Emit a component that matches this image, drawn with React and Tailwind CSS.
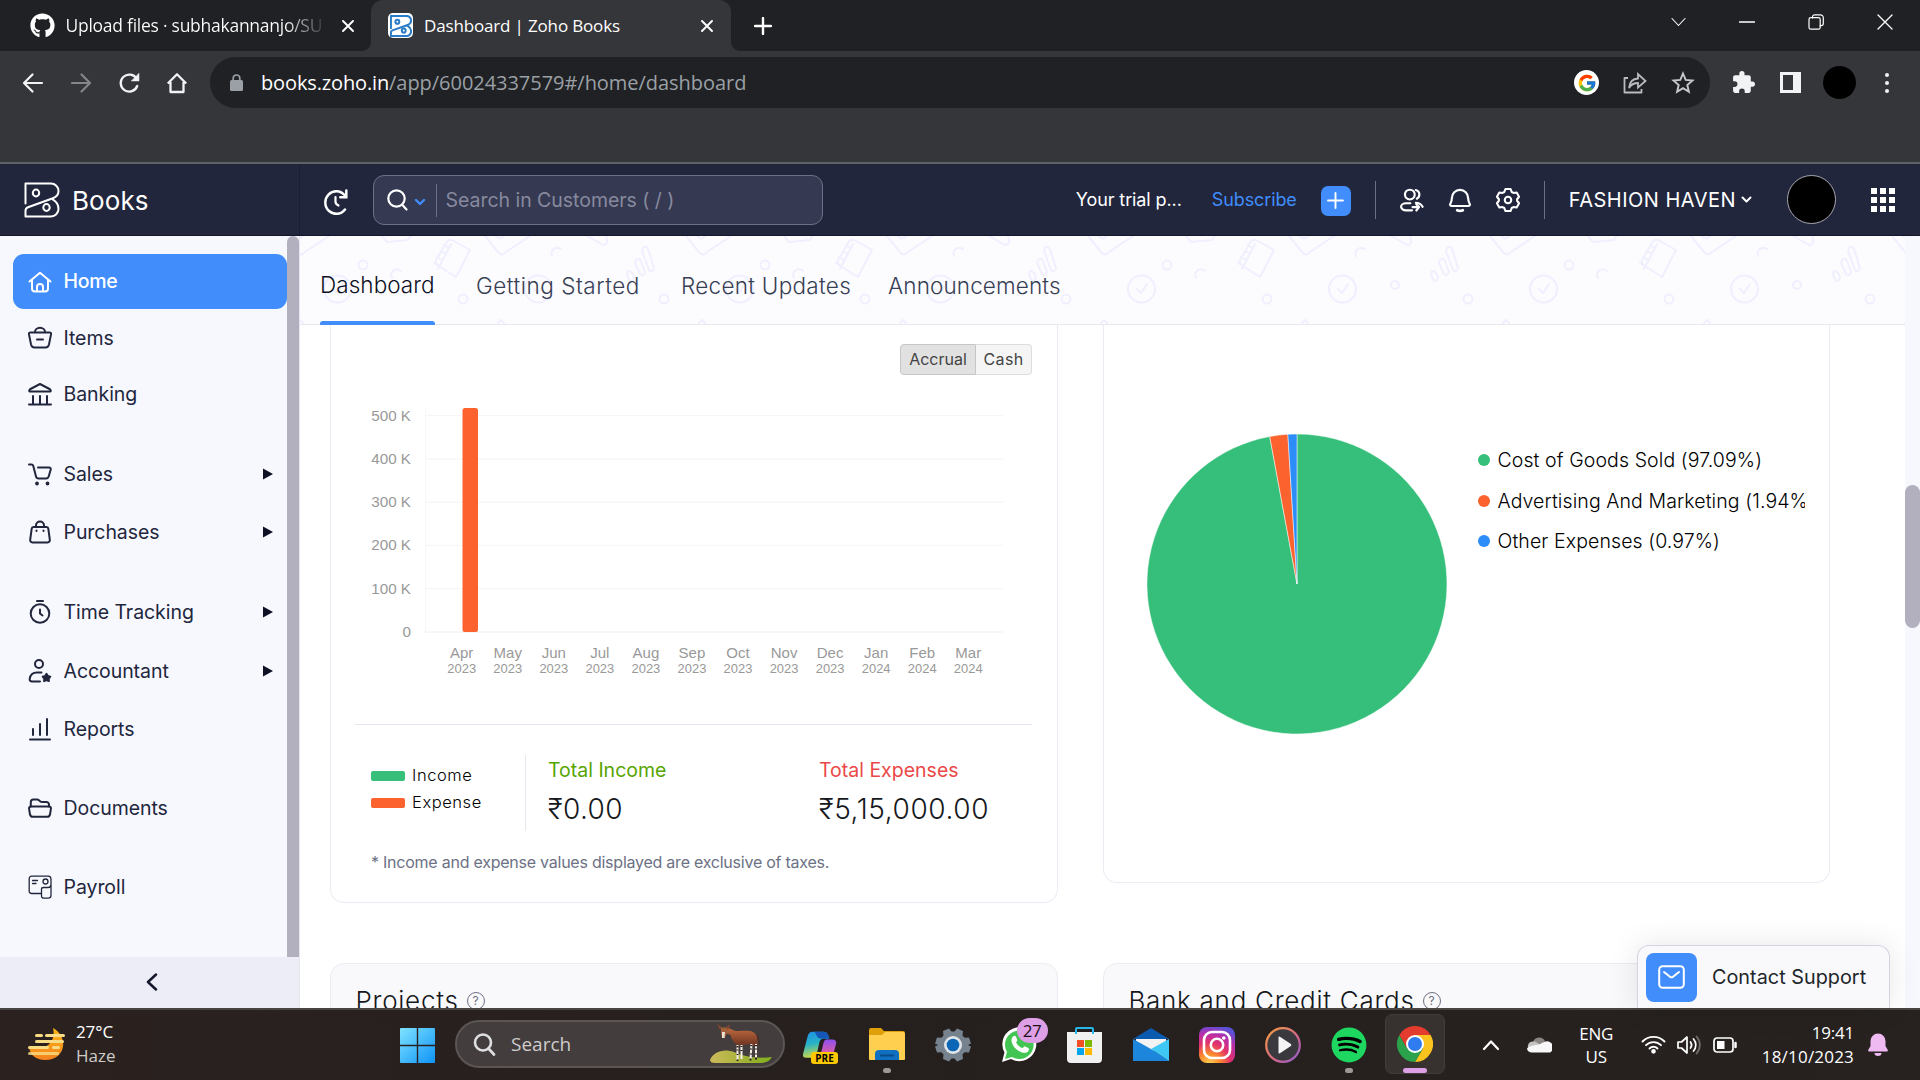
import React from "react";
import { FaGithub, FaSpotify } from "react-icons/fa";
import { FcGoogle } from "react-icons/fc";

/* ---------- shared ---------- */

function Svg({ w = 24, h = w, box = `0 0 ${w} ${h}`, sw = 2, className = "", children }) {
  return (
    <svg width={w} height={h} viewBox={box} fill="none" stroke="currentColor" strokeWidth={sw}
      strokeLinecap="round" strokeLinejoin="round" className={`block shrink-0 ${className}`}>
      {children}
    </svg>
  );
}

const BooksMark = ({ w, h, sw = 2 }) => (
  <Svg w={w} h={h} box="0 0 36 36" sw={sw}>
    <path d="M1.500 21.500V1.500H27a7.500 7.500 0 0 1 7.500 7.500c0 4-2.200 6-5.600 7.300L4 25.200c-1.800.7-2.500 1.800-2.500 3.600v5.700H27a7.500 7.500 0 0 0 7.500-7.500c0-4-2.400-7.600-5.600-9.400" />
    <ellipse cx="12" cy="11" rx="3.200" ry="3.400" />
    <ellipse cx="22.500" cy="25.500" rx="3.200" ry="3.400" />
  </Svg>
);

/* ---------- browser ---------- */

const CloseX = ({ size = 12, sw = 1.9 }) => (
  <Svg w={size} box="0 0 12 12" sw={sw}><path d="M1 1l10 10M11 1L1 11" /></Svg>
);

function TabStrip() {
  return (
    <div className="flex h-[51px] bg-[#202124] text-white">
      <div className="flex w-[371px] items-center pl-[29.500px] pr-[17px]">
        <FaGithub className="size-[25px] shrink-0" />
        <div className="ml-[11px] w-[257.500px] overflow-hidden whitespace-nowrap bg-gradient-to-r from-white from-85% to-[#3a3b3e] bg-clip-text text-[17.500px] tracking-[-0.260px] text-transparent">
          Upload files · subhakannanjo/SU
        </div>
        <div className="ml-[19px]"><CloseX /></div>
      </div>
      <div className="relative flex w-[360px] items-center rounded-t-[12px] bg-[#35363a] pl-[17px]">
        <svg className="absolute -left-[9px] bottom-0" width="9" height="9"><path d="M9 0v9H0A9 9 0 0 0 9 0" fill="#35363a" /></svg>
        <svg className="absolute -right-[9px] bottom-0" width="9" height="9"><path d="M0 0v9h9A9 9 0 0 1 0 0" fill="#35363a" /></svg>
        <div className="flex size-[25px] items-center justify-center rounded-[5px] bg-white text-[#2a7cc7]">
          <BooksMark w={22} h={22} sw={3.300} />
        </div>
        <div className="ml-[11px] w-[277px] text-[17px] tracking-[-0.160px]">Dashboard | Zoho Books</div>
        <CloseX />
      </div>
      <div className="ml-[23px] self-center"><Svg w={18} sw={2.400}><path d="M9 1v16M1 9h16" /></Svg></div>
      <div className="ml-auto mr-[27px] flex items-center gap-[53px] pb-[8px]">
        <Svg w={15} sw={1.100}><path d="M1 4.500l6.500 7 6.500-7" /></Svg>
        <Svg w={16} sw={1.300}><path d="M0.500 8h15" /></Svg>
        <Svg w={16} sw={1.200}><path d="M4.500 4V3a2.200 2.200 0 0 1 2.200-2.200h5.600A3 3 0 0 1 15.300 3.800v5.700a2.200 2.200 0 0 1-2.200 2.200h-.9" /><rect x="1" y="3.600" width="11.200" height="11.600" rx="1.800" /></Svg>
        <Svg w={16} sw={1.300}><path d="M1 1l14 14M15 1L1 15" /></Svg>
      </div>
    </div>
  );
}

function Toolbar() {
  return (
    <div className="h-[113px] border-b-2 border-[#5f6166] bg-[#35363a]">
      <div className="flex items-center pl-[22px] pt-[6px] text-[#f1f3f4]">
        <Svg w={22} sw={2.200}><path d="M20 11H2.500M10.500 2.500L2 11l8.500 8.500" /></Svg>
        <Svg w={22} sw={2.200} className="ml-[26px] text-[#85868a]"><path d="M2 11h17.500M11.500 2.500L20 11l-8.500 8.500" /></Svg>
        <Svg w={22} sw={2.300} className="ml-[26px]"><path d="M19.200 14a8.500 8.500 0 1 1-.5-7" /><path d="M21 1.500v7.500h-7.500z" fill="currentColor" strokeWidth="0.500" /></Svg>
        <Svg w={22} sw={2.300} className="ml-[26px]"><path d="M4.500 10v10h13V10M1.800 11.500L11 2.200l9.200 9.300" strokeLinecap="butt" /></Svg>
        <div className="ml-[22px] flex h-[51px] w-[1500px] items-center rounded-full bg-[#202124] pl-[20px] pr-[15px]">
          <svg width="13" height="17" viewBox="0 0 13 17"><rect y="6" width="13" height="11" rx="1.500" fill="#9aa0a6" /><path d="M3.200 7V4.300a3.300 3.300 0 0 1 6.600 0V7" fill="none" stroke="#9aa0a6" strokeWidth="1.700" /></svg>
          <div className="ml-[18px] text-[20px] text-[#9aa0a6]">
            <span className="tracking-[-0.140px] text-white">books.zoho.in</span>
            <span className="tracking-[-0.040px]">/app/60024337579#/home/dashboard</span>
          </div>
          <div className="ml-auto flex size-[25px] items-center justify-center rounded-full bg-white"><FcGoogle className="size-[20px]" /></div>
          <Svg w={24} sw={1.800} className="ml-[24px] text-[#b8bbbf]"><path d="M5 7H1.500v14.500h17V18" strokeLinecap="butt" /><path d="M6 17c.6-6 4-9.300 9-9.500V3l7.500 7-7.500 6.500V12c-4 0-7 1.500-9 5z" strokeLinejoin="miter" /></Svg>
          <Svg w={24} sw={1.900} className="ml-[24px] text-[#c6c9cc]"><path d="M12 2.500l2.700 6.400 6.800.6-5.200 4.500 1.600 6.800L12 17.200l-5.900 3.600 1.600-6.800-5.200-4.500 6.800-.6z" strokeLinejoin="miter" /></Svg>
        </div>
        <svg className="ml-[21px]" width="25" height="25" viewBox="0 0 24 24" fill="#f1f3f4"><path d="M20.500 11H19V7c0-1.100-.9-2-2-2h-4V3.500a2.500 2.500 0 0 0-5 0V5H4c-1.100 0-2 .9-2 2v3.800h1.500a2.700 2.700 0 0 1 0 5.400H2V20c0 1.100.9 2 2 2h3.800v-1.500a2.700 2.700 0 0 1 5.400 0V22H17c1.100 0 2-.9 2-2v-4h1.500a2.500 2.500 0 0 0 0-5z" /></svg>
        <svg className="ml-[24px]" width="21" height="21"><path fillRule="evenodd" fill="#f1f3f4" d="M0 0h21v21H0zM3 3v15h10V3z" /></svg>
        <div className="ml-[22px] size-[33px] rounded-full bg-black" />
        <div className="ml-[29px] flex flex-col gap-[4px]">
          {[0, 1, 2].map((i) => <i key={i} className="size-[4px] rounded-full bg-[#f1f3f4]" />)}
        </div>
      </div>
    </div>
  );
}

/* ---------- app header ---------- */

function AppHeader() {
  return (
    <header className="flex h-[72px] border-b border-[#17152b] bg-[#21263c] font-[Inter,sans-serif] text-white">
      <div className="flex w-[300px] items-center border-r border-[#1a1e31] pl-[24px]">
        <BooksMark w={36} h={36} />
        <span className="ml-[12px] mt-[2px] text-[26px] tracking-[0.100px]">Books</span>
      </div>
      <Svg w={26} sw={2.500} className="ml-[23px] mt-[25px] self-start"><path d="M22 20.500a11 11.300 0 1 1-.5-14.500" /><path d="M23.300 1.500v6.700h-6" strokeLinejoin="miter" /><path d="M12.500 8v5c0 1.500 1 2.500 3 3.500" strokeWidth="2.200" /></Svg>
      <div className="ml-[24px] mt-[11px] flex h-[50px] w-[450px] items-center rounded-[11px] border border-[#6d7084] bg-[#353952]">
        <Svg w={22} sw={2.200} className="ml-[13px]"><circle cx="9.500" cy="9.500" r="8.200" /><path d="M15.500 16L19.500 20.500" /></Svg>
        <Svg w={12} h={12} sw={2.400} className="ml-[5px] mt-[4px] text-[#408dfb]"><path d="M2 4l4 4 4-4" /></Svg>
        <div className="ml-[10px] h-[33px] w-px bg-[#6d7084]" />
        <span className="ml-[8.500px] mt-px text-[19.500px] tracking-[-0.030px] text-[#878a9e]">Search in Customers ( / )</span>
      </div>
      <div className="ml-auto flex items-center whitespace-nowrap pr-[25px]">
        <span className="w-[136px] text-[18px] tracking-[-0.100px]">Your trial p...</span>
        <span className="w-[109px] text-[18px] tracking-[-0.100px] text-[#408dfb]">Subscribe</span>
        <span className="mt-[2px] flex size-[30px] items-center justify-center rounded-[7px] bg-[#408dfb]"><Svg w={17} sw={1.900}><path d="M8.500 1v15M1 8.500h15" /></Svg></span>
        <div className="ml-[24px] h-[38px] w-px bg-[#6d7084]" />
        <Svg w={26} box="0 0 24 24" sw={2} className="ml-[23px]">
          <circle cx="10" cy="7" r="4.500" /><path d="M15.500 2.800a4.300 4.300 0 0 1 1 8" /><path d="M10.500 15H6.500a4.500 3.200 0 0 0 0 6.500h5.500M12.500 18.500H18.500M16 16l2.500 2.500-2.500 3.200M15.500 14.500c2.500 0 5 1.200 6.300 3.800" />
        </Svg>
        <Svg w={26} box="0 0 24 24" sw={2} className="ml-[22px]"><path d="M4.500 17.500c-1.500 0-2-.8-1.500-1.800 1-1.700 1.500-3 1.500-5.500a7.500 7.500 0 0 1 15 0c0 2.500.5 3.800 1.500 5.500.5 1 0 1.800-1.500 1.800z" /><path d="M9.500 21.500q2.500 1.200 5 0" strokeWidth="2.600" /></Svg>
        <Svg w={26} box="0 0 24 24" sw={1.900} className="ml-[22px]"><circle cx="12" cy="12" r="3" /><path d="M9.700 1.800h4.600l1.100 2.800 1.600.9 3-.5 2.200 4-1.800 2.300v1.400l1.800 2.300-2.200 4-3-.5-1.600.9-1.100 2.800H9.700l-1.100-2.800-1.600-.9-3 .5-2.200-4 1.800-2.300v-1.400L1.800 9 4 5l3 .5 1.600-.9z" /></Svg>
        <div className="ml-[23px] h-[38px] w-px bg-[#6d7084]" />
        <span className="ml-[24px] text-[20px] tracking-[0.480px]">FASHION HAVEN</span>
        <Svg w={11} sw={2} className="ml-[5px]"><path d="M1.500 3.500l4 4 4-4" /></Svg>
        <div className="ml-[35px] size-[49px] rounded-full border border-[#a7a8b3] bg-black" />
        <div className="ml-[35px] grid grid-cols-3 gap-[3px]">
          {Array.from({ length: 9 }, (_, i) => <i key={i} className="size-[6px] bg-white" />)}
        </div>
      </div>
    </header>
  );
}

/* ---------- sidebar ---------- */

const ICONS = {
  Home: <><path d="M1.500 11.500L12 2.800l10.500 8.700" /><path d="M4 10v8.500a3 3 0 0 0 3 3h10a3 3 0 0 0 3-3V10" /><path d="M9 21v-4a3 3 0 0 1 6 0v4" /></>,
  Items: <><path d="M2.500 6.500h19q1.800 0 1.500 1.900l-2 10q-.7 3.100-3.500 3.100h-11q-2.800 0-3.500-3.100L1 8.400Q.7 6.500 2.500 6.500zM7 6a5 4.300 0 0 1 10 0M9 13.500h6" /></>,
  Banking: <><path d="M1.500 9.500c-.6-1 0-2 1-2.500L12 2l9.500 5c1 .5 1.600 1.500 1 2.500z" /><path d="M1 22.500h22M5 14v8M12 14v8M19 14v8" /></>,
  Sales: <><path d="M1 2.500h2.500c1 0 1.500.5 1.800 1.500L8 14.500c.4 1.500 1.200 2 2.500 2h7.500c1.500 0 2.300-.7 2.700-2l2-7c.3-1.200-.4-2-1.700-2H10" /><circle cx="9" cy="21.500" r="0.900" fill="currentColor" /><circle cx="19.500" cy="21.500" r="0.900" fill="currentColor" /></>,
  Purchases: <><path d="M5.500 7h13c1 0 1.700.6 1.800 1.600l1.500 11c.2 1.800-.6 2.900-2.300 2.900h-15c-1.700 0-2.500-1.100-2.300-2.900l1.500-11C3.800 7.600 4.500 7 5.500 7zM8 7V5.500a4 4 0 0 1 8 0V7" /><path d="M8.500 10.500v.5M15.500 10.500v.5" /></>,
  "Time Tracking": <><circle cx="12" cy="13.500" r="9.300" /><path d="M9 1h6M12 9.500v4l2.500 2" /></>,
  Accountant: <><circle cx="11" cy="5" r="4" /><path d="M12 22.500H4c-2 0-2.500-1.300-2.300-2.700.7-4 3.300-6.300 7.300-6.300h4.500" /><path d="M18.500 14.800l1.300 2.200 2.500.6-1.600 2 .2 2.500-2.400-1-2.400 1 .2-2.500-1.600-2 2.500-.6z" fill="currentColor" /></>,
  Reports: <path d="M2 22.500h20M5 12v6M12 7v11M19 2v16" />,
  Documents: <><path d="M2.800 10.500V6a2.500 2.500 0 0 1 2.500-2.500h3.700c1 0 1.500.3 2.200.9l1.200 1c.6.5 1 .6 1.800.6h4.300A2.500 2.500 0 0 1 21 8.500v2" /><path d="M3 10.500h18c1.500 0 2.100 1 1.900 2.300l-.8 5.200c-.3 1.700-1.200 2.800-2.800 2.800H4.700c-1.600 0-2.500-1.100-2.800-2.800l-.8-5.200c-.2-1.300.4-2.300 1.900-2.300z" /></>,
  Payroll: <g strokeWidth="1.300"><path d="M13 18.500H3.500a2.300 2.300 0 0 1-2.300-2.300V3.500a2.300 2.300 0 0 1 2.300-2.300H20A3 3 0 0 1 23 4v16.500a2.800 2.800 0 0 1-2.800 2.700h-4.400a2.300 2.300 0 0 1-2.300-2.300v-6.700c0-1.500 1-1.700 2-1.700H20c1.500 0 3-1 3-3" /><circle cx="17.500" cy="6.500" r="2.500" /><path d="M4.500 5.500h5M4.500 8.500h3.500" /></g>,
};

const NAV = [
  { label: "Home", row: "mt-[18px] h-[55px] rounded-[11px] bg-[#408dfb] text-white" },
  { label: "Items", row: "mt-px h-[56px]" },
  { label: "Banking", row: "h-[56px]" },
  { label: "Sales", row: "mt-[24px] h-[56px]", more: true },
  { label: "Purchases", row: "mt-[2px] h-[56px]", more: true },
  { label: "Time Tracking", row: "mt-[24px] h-[56px]", more: true },
  { label: "Accountant", row: "mt-[3px] h-[56px]", more: true },
  { label: "Reports", row: "mt-[2px] h-[56px]" },
  { label: "Documents", row: "mt-[23px] h-[56px]" },
  { label: "Payroll", row: "mt-[23px] h-[56px]" },
];

function Sidebar() {
  return (
    <aside className="flex w-[300px] shrink-0 flex-col border-r border-[#e6e6ef] bg-[#f7f8fe]">
      <div className="flex h-[721px]">
        <nav className="w-[287px] pl-[13px] text-[#21263c]">
          {NAV.map(({ label, row, more }) => (
            <div key={label} className={`flex items-center pl-[15px] ${row}`}>
              <Svg w={24}>{ICONS[label]}</Svg>
              <span className={`ml-[11.500px] mt-px text-[19.500px] ${label === "Home" ? "font-medium tracking-[-0.300px]" : "tracking-[-0.060px]"}`}>{label}</span>
              {more && <svg className="ml-auto mr-[14px]" width="10" height="12"><path d="M0 0.500l10 5.500L0 11.500z" fill="#0f1225" /></svg>}
            </div>
          ))}
        </nav>
        <div className="w-[12px] rounded-t-full bg-[#b2afbe]" />
      </div>
      <div className="flex flex-1 items-center justify-center bg-[#ecedf7] pb-px pl-[4px] text-[#15182b]">
        <Svg w={12} h={18} sw={2.500}><path d="M10 1.500L2 9l8 7.500" /></Svg>
      </div>
    </aside>
  );
}

/* ---------- dashboard ---------- */

function Doodles() {
  return (
    <svg className="absolute inset-0" width="1605" height="88">
      <defs>
        <pattern id="doodles" x="386" y="0" width="402" height="88" patternUnits="userSpaceOnUse">
          <g fill="none" stroke="#f0effe" strokeWidth="2" strokeLinejoin="round" strokeLinecap="round">
            {[0, 201].map((x) => (
              <g key={x} transform={`translate(${x} 0)`}>
                <path d="M0 0l13 16q4 5 8 0L45 0M11 0q4 5 8 0M13 87l3-3 3 3" />
                <circle cx="53.500" cy="53" r="13.500" />
                <path d="M49 53l4 4 6-9" />
                <circle cx="179" cy="63" r="4.500" />
              </g>
            ))}
            <path d="M98 0l5 6 21-2 3-5" />
            <path d="M168 4l18 10-14 27-19-12q-2-2-1-5l10-17q2-4 6-3M167 8l-13 25M160 9l5 3M157 15l5 3M153 21l5 3M150 27l5 3" />
            <path d="M268 20c-2-6 3-10 9-7M108 42c-3-7 4-11 9-7M303 0l16 9q6 0 3-9" />
            <circle cx="79" cy="29" r="4.500" /><circle cx="307" cy="49" r="4" />
            <path d="M359 12q3-3 5 1l6 19q-2 5-5 2l-7-19zM352 24q3-3 5 1l4 11q-2 5-5 2l-5-11zM344 35q5 0 6 7-2 5-5 1-3-5-1-8z" />
          </g>
        </pattern>
      </defs>
      <rect width="1605" height="88" fill="url(#doodles)" />
    </svg>
  );
}

function Tabs() {
  return (
    <div className="relative h-[89px] border-b border-[#e8e8f1] bg-[#fcfcff]">
      <Doodles />
      <div className="relative flex h-[89px] whitespace-nowrap pl-[20px] text-[22.500px] font-[360] leading-[28px] text-[#383e54]">
        <div className="w-[115px] pt-[35px] tracking-[0.060px] text-[#0d1022]">
          Dashboard
          <div className="mt-[22px] h-[4px] rounded-t-[3px] bg-[#408dfb]" />
        </div>
        <div className="ml-[41px] w-[205px] pt-[36px] tracking-[0.520px]">Getting Started</div>
        <div className="w-[207px] pt-[36px] tracking-[0.280px]">Recent Updates</div>
        <div className="pt-[36px] tracking-[0.120px]">Announcements</div>
      </div>
    </div>
  );
}

const MONTHS = ["Apr", "May", "Jun", "Jul", "Aug", "Sep", "Oct", "Nov", "Dec", "Jan", "Feb", "Mar"];
const TICKS = ["500 K", "400 K", "300 K", "200 K", "100 K", "0"];

function BarChart() {
  return (
    <svg className="mt-[20px] block" width="673" height="300" viewBox="355 395 673 300" fontFamily="'Liberation Sans', Arial, sans-serif" fill="#999">
      <path d="M425.500 408V632" stroke="#f7f7f7" />
      {TICKS.map((t, i) => (
        <g key={t}>
          <path d={`M425 ${415.500 + i * 43.300}H1003`} stroke={i === 5 ? "#efeff1" : "#f6f6f7"} strokeWidth="1.200" />
          <text x="411" y={420.500 + i * 43.250} textAnchor="end" fontSize="15.200">{t}</text>
        </g>
      ))}
      <rect x="462.500" y="408" width="15.500" height="224" rx="2.500" fill="#fb622e" />
      {MONTHS.map((m, i) => (
        <g key={m} textAnchor="middle">
          <text x={461.700 + i * 46.050} y="657.800" fontSize="15">{m}</text>
          <text x={461.700 + i * 46.050} y="672.700" fontSize="13.700" textLength="28.800" lengthAdjust="spacingAndGlyphs">{i < 9 ? "2023" : "2024"}</text>
        </g>
      ))}
    </svg>
  );
}

function IncomeCard() {
  return (
    <section className="flex h-[578px] w-[728px] flex-col rounded-b-[14px] border border-t-0 border-[#ebebf3] bg-white pl-[24px] pr-[25px]">
      <div className="mt-[19px] flex h-[31px] self-end text-[16px] leading-[29px] text-[#444]">
        <span className="w-[76px] rounded-l-[4px] border border-[#c6c6c6] bg-[#e1e1e1] text-center">Accrual</span>
        <span className="w-[56px] rounded-r-[4px] border border-l-0 border-[#ddd] bg-[#f5f5f5] text-center tracking-[0.300px]">Cash</span>
      </div>
      <BarChart />
      <div className="mt-[29px] h-px shrink-0 bg-[#e6e6f0]" />
      <div className="mt-[30px] flex h-[76px] whitespace-nowrap pl-[16px]">
        <div className="w-[155px] border-r border-[#e6e6ee] pt-[7px] text-[16.500px] font-[360] leading-[27px] tracking-[0.560px] text-black">
          <div className="flex items-center"><i className="mr-[7px] h-[10px] w-[34px] rounded-[2px] bg-[#36bf7a]" />Income</div>
          <div className="flex items-center"><i className="mr-[7px] h-[10px] w-[34px] rounded-[2px] bg-[#fb622e]" />Expense</div>
        </div>
        <div className="w-[293px] pl-[22px] pt-[2px]">
          <div className="text-[19.500px] leading-[26px] text-[#57a500]">Total Income</div>
          <div className="mt-[8px] text-[28px] font-[360] leading-[36px] tracking-[0.400px] text-[#15181c]">₹0.00</div>
        </div>
        <div className="pt-[2px]">
          <div className="text-[19.500px] leading-[26px] text-[#ea4848]">Total Expenses</div>
          <div className="mt-[8px] text-[28px] font-[360] leading-[36px] tracking-[0.600px] text-[#15181c]">₹5,15,000.00</div>
        </div>
      </div>
      <p className="mt-[18px] whitespace-nowrap pl-[16px] text-[16px] leading-[26px] tracking-[-0.240px] text-[#6c7184]">* Income and expense values displayed are exclusive of taxes.</p>
    </section>
  );
}

const SLICES = [
  { d: "M150 150L150 0A150 150 0 1 1 122.700 2.500Z", fill: "#36bf7a" },
  { d: "M150 150L122.700 2.500A150 150 0 0 1 140.860 0.300Z", fill: "#fb622e" },
  { d: "M150 150L140.860 0.300A150 150 0 0 1 150 0Z", fill: "#2c8df8" },
];

function ExpensesCard() {
  return (
    <section className="ml-[45px] flex h-[558px] w-[727px] rounded-b-[14px] border border-t-0 border-[#ebebf3] bg-white pl-[43px]">
      <svg className="mt-[109px]" width="300" height="300">
        {SLICES.map((s) => <path key={s.fill} d={s.d} fill={s.fill} stroke="#fff" strokeOpacity="0.700" strokeWidth="0.700" />)}
      </svg>
      <ul className="ml-[30.500px] mt-[115px] w-[327px] overflow-hidden whitespace-nowrap text-[19.500px] font-[340] leading-[40.500px] tracking-[0.100px] text-black">
        <li className="flex items-center"><i className="mr-[8px] size-[12px] shrink-0 rounded-full bg-[#36bf7a]" />Cost of Goods Sold (97.09%)</li>
        <li className="flex items-center"><i className="mr-[8px] size-[12px] shrink-0 rounded-full bg-[#fb622e]" />Advertising And Marketing (1.94%)</li>
        <li className="flex items-center"><i className="mr-[8px] size-[12px] shrink-0 rounded-full bg-[#2c8df8]" />Other Expenses (0.97%)</li>
      </ul>
    </section>
  );
}

function StubCard({ title, className }) {
  return (
    <section className={`flex h-[90px] items-start rounded-t-[14px] border border-[#ebebf3] bg-[#f9f9fb] pl-[24.500px] pt-[20px] text-[26px] font-[360] leading-[34px] tracking-[0.720px] text-[#15181c] ${className}`}>
      {title}
      <span className="ml-[8px] mt-[8px] flex size-[18px] items-center justify-center rounded-full border-[1.500px] border-[#6c7184] text-[12px] font-normal tracking-normal text-[#6c7184]">?</span>
    </section>
  );
}

function Main() {
  return (
    <main className="relative flex min-w-0 flex-1">
      <div className="w-[1605px] overflow-hidden bg-white">
        <Tabs />
        <div className="flex items-start pl-[30px]"><IncomeCard /><ExpensesCard /></div>
        <div className="mt-[60px] flex pl-[30px]">
          <StubCard title="Projects" className="w-[728px]" />
          <StubCard title="Bank and Credit Cards" className="ml-[45px] w-[727px]" />
        </div>
      </div>
      <div className="w-[15px] bg-[#f7f7fe] pt-[249px]"><div className="h-[143px] rounded-full bg-[#b2afbe]" /></div>
      <div className="absolute bottom-0 right-[30px] flex h-[63px] w-[253px] items-center rounded-t-[12px] border border-b-0 border-[#d3d3e3] bg-[#f9f9fc] pl-[8px] text-[19.800px] text-[#212529] shadow-[0_0_30px_rgba(0,0,20,0.100)]">
        <span className="mr-[15px] mt-px flex h-[49px] w-[51px] items-center justify-center rounded-[8px] bg-[#408dfb] text-white">
          <Svg w={27} h={24} sw={2} className="mb-[2px]"><rect x="1.200" y="1.200" width="24.600" height="21.600" rx="3.500" /><path d="M6 7l6 4.800q1.500 1 3 0L21 7" /></Svg>
        </span>
        <span className="mt-[2px] tracking-[0.030px]">Contact Support</span>
      </div>
    </main>
  );
}

/* ---------- taskbar ---------- */

const Slot = ({ children, dot }) => (
  <div className="relative flex h-[70px] w-[66px] items-center justify-center pb-px">
    {children}
    {dot && <i className="absolute bottom-[7px] left-[29px] h-[5px] w-[8px] rounded-full bg-[#9b9896]" />}
  </div>
);

function Haze() {
  return (
    <svg width="38" height="36" viewBox="0 0 38 36" className="mb-px">
      <defs><linearGradient id="moon" x1="0" y1="0" x2="0" y2="1"><stop offset="0" stopColor="#fdb913" /><stop offset="1" stopColor="#f4821f" /></linearGradient></defs>
      <path d="M25 1c16 9 13 32-8 32C8 33 2 28 1 20c13 6 28-3 24-19z" fill="url(#moon)" />
      <g fill="#f9dd86"><rect x="7" y="7" width="8" height="3" rx="1.500" /><rect x="17" y="7" width="20" height="3" rx="1.500" /><rect x="7" y="13" width="29" height="3" rx="1.500" /><rect x="0" y="19" width="21" height="3" rx="1.500" /><rect x="24" y="19" width="8" height="3" rx="1.500" /><rect x="0" y="25" width="31" height="3" rx="1.500" opacity=".8" /></g>
    </svg>
  );
}

function Okapi() {
  return (
    <svg width="64" height="40" viewBox="0 0 64 40">
      <defs>
        <linearGradient id="hill" x1="0" y1="0" x2="1" y2="0"><stop offset="0" stopColor="#cdb95a" /><stop offset="1" stopColor="#7fae1b" /></linearGradient>
        <linearGradient id="hide" x1="0" y1="0" x2="0" y2="1"><stop offset="0" stopColor="#c0693f" /><stop offset="1" stopColor="#6b3220" /></linearGradient>
      </defs>
      <path d="M0 36c3-8 14-12 24-8 10 4 20 7 38 5-2 4-6 6-12 6H5c-3 0-5-1-5-3z" fill="url(#hill)" />
      <path d="M16 4c3 0 5 1 8 2.500 5 1.500 13-1 19 1.500 4 2 5 7 4.500 13l-3 1c-2-1-3-2-5-2-4 1-7 1.500-12 1-4-2-6-6-7-10l-5-2z" fill="url(#hide)" />
      <path d="M11 3.500h6l2 4-3 3-1 3.500h-3L11 9z" fill="#a2613b" />
      <path d="M12 8h3l-.5 6h-2.500z" fill="#ece0d3" />
      <path d="M7 0l4.500 3-1.500 2.500zM20 0l-4 3.500 2 2.500z" fill="#8a4a2c" />
      <g strokeWidth="2">
        <path d="M27.500 21v15.500M31.500 21v14M41.500 20l-1 15.500M46 20v15" stroke="#f4eee8" />
        <path d="M27.500 22v1.500M31.500 22v1M41.500 21l-.1 1.200M46 21v1.200M27.500 25.500v1M31.500 26v1M41 24.500v1M46 24.500v1M27.500 30v1M41 29.500v1M46 29.500v1M27.500 35.500v1.500M40.500 34.500v2M46 33.500v2" stroke="#2b1710" />
      </g>
      <path d="M47.500 11l2 10" stroke="#4a261a" />
    </svg>
  );
}

function Copilot() {
  return (
    <div className="relative mr-px mt-[5px]">
      <svg width="35" height="33" viewBox="0 0 36 43" preserveAspectRatio="none">
        <defs>
          <linearGradient id="cpA" x1="0" y1="0" x2="0.200" y2="1"><stop offset="0" stopColor="#1d8fe8" /><stop offset=".5" stopColor="#27b3c6" /><stop offset="1" stopColor="#c6d84b" /></linearGradient>
          <linearGradient id="cpB" x1="0" y1="0" x2="0" y2="1"><stop offset="0" stopColor="#8f4ff0" /><stop offset="1" stopColor="#f8648c" /></linearGradient>
        </defs>
        <path d="M10 1h11q4 0 5 5l1 4h-6q-3 0-4 4l-3 17q-1 4-4 4H4q-5 0-4-5L5 6q1-5 5-5z" fill="url(#cpA)" />
        <path d="M12 1h9q4 0 5 5l1 4h-8q-4 0-5-4z" fill="#1557b8" />
        <path d="M24 11h6q5 0 4 6l-3 14q-1 5-5 5H13q4 0 5-4l3-16q1-5 3-5z" fill="url(#cpB)" />
      </svg>
      <span className="absolute bottom-0 left-[8px] h-[12px] w-[27px] rounded-[3px] bg-[#fdc800] text-center text-[10px] font-bold leading-[12px] text-black">PRE</span>
    </div>
  );
}

const Explorer = () => (
  <svg width="36" height="33" viewBox="0 0 36 33">
    <path d="M0 2q0-2 2-2h10l3 3h19q2 0 2 2v6H0z" fill="#dfa00c" />
    <path d="M0 7h13l3-3h18q2 0 2 2v25q0 1-1 1H1q-1 0-1-1z" fill="#ffd04f" />
    <path d="M6 32v-6q0-4 4-4h16q4 0 4 4v6z" fill="#0f6fc0" /><path d="M12 27.500h12" stroke="#0a4a86" strokeWidth="2" strokeLinecap="round" />
  </svg>
);

const Settings = () => (
  <svg width="36" height="36" viewBox="0 0 36 36">
    <path d="M14 1.500l2.500 3h3L22 1.500l6 2.500-.5 4.500 2 2.200 4.500-.2 2 6-3 1.500 3 1.500-2 6-4.500-.2-2 2.200.5 4.500-6 2.500-2.500-3h-3l-2.500 3-6-2.500.5-4.500-2-2.200-4.500.2-2-6L3 18l-3-1.500 2-6 4.500.2 2-2.200L8 4z" fill="#76828e" />
    <circle cx="18" cy="18" r="9" fill="#dfe4e9" /><circle cx="18" cy="18" r="6.300" fill="#0b67b5" />
  </svg>
);

const WhatsApp = () => (
  <div className="relative">
    <svg width="37" height="37" viewBox="0 0 37 37">
      <path d="M1 36l2.500-9.500A17 17 0 1 1 10 33z" fill="#fff" /><path d="M4 33l2-7A14.300 14.300 0 1 1 11 31z" fill="#43c553" />
      <path d="M12 10.500c1-1 2.500-1 3 .2l1.200 3c.3.800-.1 1.400-1.200 2.600 1.600 3 3.600 4.700 6.600 6 1.100-1.500 1.700-2.200 2.500-1.900l3.200 1.500c1 .5.700 2.200 0 3.300-1.500 1.800-4.200 2.100-7 1-5-2-8.500-5.700-9.700-10.500-.3-2 .2-4 1.400-5.200z" fill="#fff" />
    </svg>
    <span className="absolute -top-[8px] left-[16px] flex h-[25px] w-[31px] items-center justify-center rounded-full bg-[#dd9fe6] text-[17px] tracking-[-0.500px] text-[#1b1017]">27</span>
  </div>
);

const Store = () => (
  <svg width="35" height="36" viewBox="0 0 35 36" className="mr-px">
    <path d="M9 7V2q0-1 1-1h15q1 0 1 1v5" fill="none" stroke="#27b6ea" strokeWidth="2" />
    <path d="M0 5h35v27q0 4-4 4H4q-4 0-4-4z" fill="#f1f1f1" /><path d="M9 5v2M26 5v2" stroke="#27b6ea" strokeWidth="2" />
    <path d="M10 13h7v7h-7z" fill="#f25022" /><path d="M18 13h7v7h-7z" fill="#7fba00" /><path d="M10 21h7v7h-7z" fill="#00a4ef" /><path d="M18 21h7v7h-7z" fill="#ffb900" />
  </svg>
);

const Mail = () => (
  <svg width="36" height="34" viewBox="0 0 36 34">
    <path d="M0 11L18 0l18 11z" fill="#0a5ab0" /><path d="M3 11h30v5L18 24 3 16z" fill="#f3f3f3" />
    <path d="M0 11v22h36L18 21z" fill="#1c86dd" /><path d="M36 11v22L18 21z" fill="#3fc8f4" />
  </svg>
);

const Instagram = () => (
  <svg width="36" height="36" viewBox="0 0 36 36">
    <defs><radialGradient id="ig" cx=".28" cy="1.050" r="1.100"><stop offset="0" stopColor="#fed85a" /><stop offset=".28" stopColor="#fb8a2e" /><stop offset=".55" stopColor="#e3316b" /><stop offset=".8" stopColor="#b52fae" /><stop offset="1" stopColor="#5b50d6" /></radialGradient></defs>
    <rect width="36" height="36" rx="8" fill="url(#ig)" /><rect x="5" y="5" width="26" height="26" rx="8" fill="none" stroke="#fff" strokeWidth="2.600" /><circle cx="18" cy="18" r="6.200" fill="none" stroke="#fff" strokeWidth="2.600" /><circle cx="24.800" cy="11" r="1.800" fill="#fff" />
  </svg>
);

const MediaPlayer = () => (
  <svg width="36" height="36" viewBox="0 0 36 36">
    <defs><linearGradient id="mp" x1="0" y1="0" x2="1" y2="1"><stop offset="0" stopColor="#f9a03c" /><stop offset=".6" stopColor="#d0648a" /><stop offset="1" stopColor="#8a5fd6" /></linearGradient></defs>
    <circle cx="18" cy="18" r="16.800" fill="#3a3a3e" stroke="url(#mp)" strokeWidth="2.200" /><path d="M13.500 10.500q0-1.500 1.400-.7l11 7.300q1 .9 0 1.800l-11 7.300q-1.400.8-1.400-.7z" fill="#f4f4f4" />
  </svg>
);

const Chrome = () => (
  <svg width="36" height="36" viewBox="0 0 36 36">
    <path d="M18 9h15.600A18 18 0 0 1 18 36l7.800-13.500z" fill="#fcc31e" />
    <path d="M2.400 9A18 18 0 0 0 18 36l7.800-13.500-15.600 0z" fill="#2ba24c" />
    <path d="M2.400 9l7.800 13.500L18 9H33.600A18 18 0 0 0 2.400 9z" fill="#e33b2e" />
    <circle cx="18" cy="18" r="9" fill="#fff" /><circle cx="18" cy="18" r="7" fill="#2f7bf0" />
  </svg>
);

function Taskbar() {
  return (
    <footer className="flex h-[72px] items-start border-t-2 border-[#474443] bg-[#272120] bg-gradient-to-r from-[#2b2220] via-[#251f1d] to-[#272220] text-[17px] text-white">
      <div className="flex h-[70px] w-[372px] items-center pl-[28px]">
        <Haze />
        <div className="mb-[2px] ml-[10px] leading-[24px]"><div className="tracking-[-0.100px]">27°C</div><div className="text-[#cfcbc9]">Haze</div></div>
      </div>
      <div className="flex h-[70px] w-[416px] items-center pl-[28px]">
        <svg width="35" height="35" viewBox="0 0 35 35">
          <defs><linearGradient id="win" x1="0" y1="0" x2="1" y2="1"><stop offset="0" stopColor="#7fe3fe" /><stop offset="1" stopColor="#0f93f8" /></linearGradient></defs>
          <path d="M1 0h15.800v16.800H0V1q0-1 1-1zM18.200 0H34q1 0 1 1v15.800H18.200zM0 18.200h16.800V35H1q-1 0-1-1zM18.200 18.200H35V34q0 1-1 1H18.200z" fill="url(#win)" />
        </svg>
        <div className="mb-[2px] ml-[20px] flex h-[48px] w-[330px] items-center rounded-full border-2 border-[#5b5654] bg-[#433e3d] pl-[16px] pr-[9px] text-[19px] text-[#cfcccb]">
          <Svg w={23} sw={2.600} className="text-[#dfdfe2]"><circle cx="10" cy="9.500" r="8" /><path d="M15.500 15.500l5.500 6" /></Svg>
          <span className="ml-[15px] mr-auto">Search</span>
          <Okapi />
        </div>
      </div>
      <Slot><Copilot /></Slot>
      <Slot dot><Explorer /></Slot>
      <Slot><Settings /></Slot>
      <Slot><WhatsApp /></Slot>
      <Slot><Store /></Slot>
      <Slot><Mail /></Slot>
      <Slot><Instagram /></Slot>
      <Slot><MediaPlayer /></Slot>
      <Slot dot><div className="flex size-[34px] items-center justify-center rounded-full bg-black"><FaSpotify className="size-[36px] shrink-0 text-[#1ed760]" /></div></Slot>
      <div className="relative ml-[3px] mt-[4px] flex h-[60px] w-[60px] items-center justify-center rounded-[7px] border border-[#423c3b] bg-[#37312f]">
        <Chrome />
        <i className="absolute bottom-0 left-[17px] h-[5px] w-[24px] rounded-full bg-[#dd9fe6]" />
      </div>
      <div className="ml-auto flex h-[70px] items-center pb-px pr-[32px]">
        <Svg w={18} sw={2.200}><path d="M2 13l7-7.500L16 13" /></Svg>
        <svg className="ml-[27px]" width="25" height="17" viewBox="0 0 25 17"><path d="M6 6a6.500 6.500 0 0 1 12-1l-6 6z" fill="#8a8684" /><path d="M6 5.500a6 6 0 0 1 4 1l8 6-14 3A5.200 5.200 0 0 1 6 5.500z" fill="#c5c3c2" /><path d="M17 6a5 5 0 0 1 6 10.500H5c-3 0-5-2-5-4 4-4 11-3 14-5z" fill="#f8f8f8" /></svg>
        <div className="ml-[27px] w-[35px] text-center leading-[23px] tracking-[-0.200px]">ENG<br />US</div>
        <Svg w={25} h={19} sw={1.900} className="ml-[27px]"><path d="M1.500 6.500a15.500 15.500 0 0 1 22 0M5 10.200a10.600 10.600 0 0 1 15 0M8.500 13.500a5.600 5.600 0 0 1 8 0" /><circle cx="12.500" cy="16.300" r="1.400" fill="currentColor" /></Svg>
        <Svg w={24} h={20} sw={1.700} className="ml-[11px]"><path d="M1 7v6h3.500L10 18V2L4.500 7zM13.500 7a5 5 0 0 1 0 6M16.500 4a9 9 0 0 1 0 12" /><path d="M19.500 1.500a12.500 12.500 0 0 1 0 17" opacity=".35" /></Svg>
        <Svg w={24} h={16} sw={1.700} className="ml-[12px]"><rect x="1" y="1" width="19" height="14" rx="3" /><rect x="4" y="4" width="7.500" height="8" fill="currentColor" stroke="none" /><path d="M22.500 6v4" strokeWidth="2.500" /></Svg>
        <div className="ml-[25px] text-right leading-[24px] tracking-[0.200px]"><div className="tracking-[-0.200px]">19:41</div><div>18/10/2023</div></div>
        <svg className="ml-[14px]" width="20" height="23" viewBox="0 0 20 23"><path d="M2.500 8a7.500 7.500 0 0 1 15 0v5l2.300 4q.4 1.500-1 1.500H1.200q-1.400 0-1-1.500l2.300-4zM6.500 20h7a3.500 3 0 0 1-7 0z" fill="#efb9f2" /></svg>
      </div>
    </footer>
  );
}

export default function App() {
  return (
    <div className="flex h-[1080px] w-[1920px] flex-col overflow-hidden bg-white font-['Open_Sans','Noto_Sans',sans-serif]">
      <TabStrip />
      <Toolbar />
      <AppHeader />
      <div className="flex h-[772px] font-[Inter,sans-serif]">
        <Sidebar />
        <Main />
      </div>
      <Taskbar />
    </div>
  );
}
